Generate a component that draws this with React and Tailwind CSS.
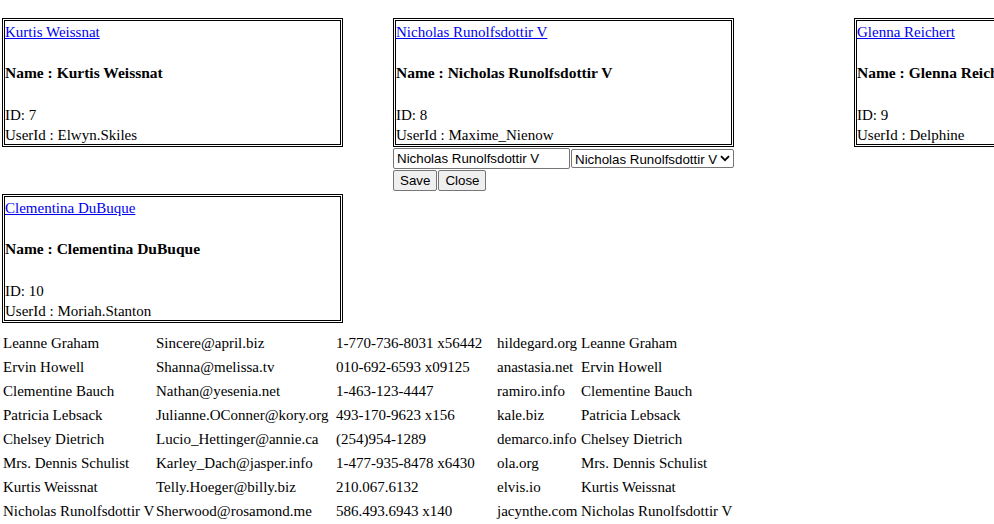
import { useState } from "react";

const posts = [
  { id: 7, name: "Kurtis Weissnat", userId: "Elwyn.Skiles" },
  { id: 8, name: "Nicholas Runolfsdottir V", userId: "Maxime_Nienow", editing: true },
  { id: 9, name: "Glenna Reichert", userId: "Delphine" },
  { id: 10, name: "Clementina DuBuque", userId: "Moriah.Stanton" },
];

const users = [
  ["Leanne Graham", "Sincere@april.biz", "1-770-736-8031 x56442", "hildegard.org", "Leanne Graham"],
  ["Ervin Howell", "Shanna@melissa.tv", "010-692-6593 x09125", "anastasia.net", "Ervin Howell"],
  ["Clementine Bauch", "Nathan@yesenia.net", "1-463-123-4447", "ramiro.info", "Clementine Bauch"],
  ["Patricia Lebsack", "Julianne.OConner@kory.org", "493-170-9623 x156", "kale.biz", "Patricia Lebsack"],
  ["Chelsey Dietrich", "Lucio_Hettinger@annie.ca", "(254)954-1289", "demarco.info", "Chelsey Dietrich"],
  ["Mrs. Dennis Schulist", "Karley_Dach@jasper.info", "1-477-935-8478 x6430", "ola.org", "Mrs. Dennis Schulist"],
  ["Kurtis Weissnat", "Telly.Hoeger@billy.biz", "210.067.6132", "elvis.io", "Kurtis Weissnat"],
  ["Nicholas Runolfsdottir V", "Sherwood@rosamond.me", "586.493.6943 x140", "jacynthe.com", "Nicholas Runolfsdottir V"],
];

// column widths incl. 1px padding each side
const colWidths = ["w-[151px]", "w-[178px]", "w-[159px]", "w-[82px]", "w-[156px]"];

function Card({ post }) {
  return (
    <div className="w-[341px] h-[129px] border-[3px] border-double border-black pt-[1px]">
      <a href="#" className="block leading-[20px] text-[#0000ee] underline">{post.name}</a>
      <h4 className="mt-[21px] mb-[22px] leading-[20px] text-[15.5px] font-bold">Name : {post.name}</h4>
      <p className="leading-[20px]">ID: {post.id}</p>
      <p className="leading-[20px]">UserId : {post.userId}</p>
    </div>
  );
}

function EditBox({ name }) {
  const [title, setTitle] = useState(name);
  return (
    <div className="font-['Liberation_Sans',Arial,sans-serif] text-[13.33px]">
      <div className="flex items-center gap-[1px] h-[23px]">
        <input
          value={title}
          onChange={(e) => setTitle(e.target.value)}
          className="w-[177px] h-[21px] px-[3px] border border-[#767676] rounded-[2px] text-black outline-none"
        />
        <div className="relative w-[163px] h-[19px]">
          <select className="appearance-none w-full h-full pl-[3px] pr-[12px] border border-[#767676] rounded-[2px] bg-white text-black">
            <option>Nicholas Runolfsdottir V</option>
          </select>
          <svg className="absolute right-[4px] top-[6px] pointer-events-none" width="10" height="7" viewBox="0 0 10 7">
            <path d="M1 1.2 5 5.2 9 1.2" fill="none" stroke="#000" strokeWidth="1.8" />
          </svg>
        </div>
      </div>
      <div className="flex gap-[1px]">
        <button className="h-[21px] px-[6px] bg-[#efefef] border border-[#767676] rounded-[2px] text-black">Save</button>
        <button className="h-[21px] px-[6px] bg-[#efefef] border border-[#767676] rounded-[2px] text-black">Close</button>
      </div>
    </div>
  );
}

export default function App() {
  return (
    <div className="w-[994px] h-[524px] overflow-hidden bg-white text-black font-['Liberation_Serif','Times_New_Roman',serif] text-[15px]">
      <div className="grid grid-cols-[391px_461px_341px] gap-y-[3px] pl-[2px] pt-[18px] items-start">
        {posts.map((post) => (
          <div key={post.id}>
            <Card post={post} />
            {post.editing && <EditBox name={post.name} />}
          </div>
        ))}
      </div>

      <table className="table-fixed w-[738px] mt-[7px] border-separate border-spacing-[2px]">
        <tbody>
          {users.map((u, i) => (
            <tr key={i}>
              {u.map((cell, j) => (
                <td key={j} className={`${colWidths[j]} p-[1px] leading-[20px] whitespace-nowrap`}>{cell}</td>
              ))}
            </tr>
          ))}
        </tbody>
      </table>
    </div>
  );
}
